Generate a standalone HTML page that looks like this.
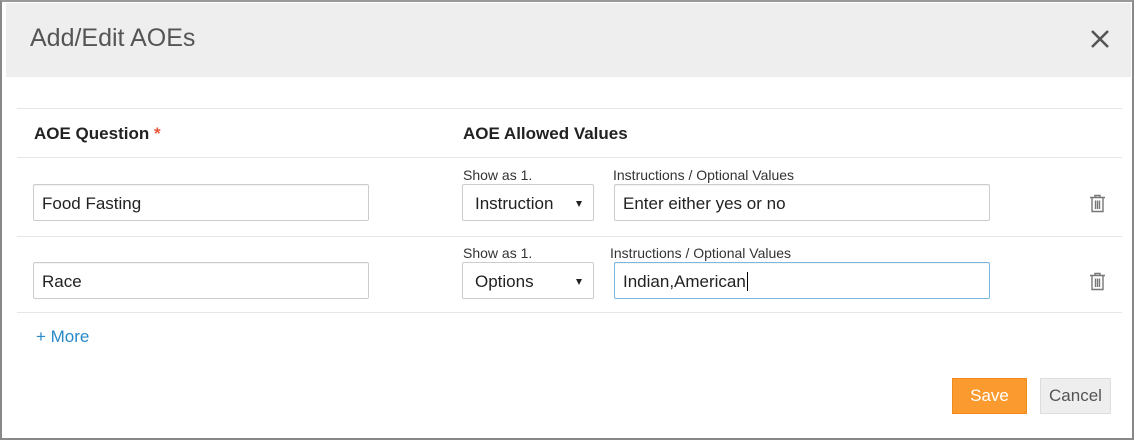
<!DOCTYPE html>
<html><head><meta charset="utf-8"><style>
*{box-sizing:border-box;margin:0;padding:0}
body{width:1137px;height:441px;background:#fff;font-family:"Liberation Sans",sans-serif;position:relative;overflow:hidden;color:#222}
.frame{position:absolute;left:0;top:0;width:1134px;height:440px;border-left:2px solid #888;border-top:2px solid #999;border-right:2px solid #888;border-bottom:2px solid #888}
.hdr{position:absolute;left:6px;top:3px;width:1125px;height:74px;background:#eee}
.title{position:absolute;left:30px;top:24px;font-size:25px;color:#555}
.x{position:absolute;left:1089px;top:28px}
.line{position:absolute;left:17px;width:1105px;height:1px;background:#e6e6e6}
.lbl{position:absolute;font-size:17px;font-weight:bold;color:#222}
.inp{position:absolute;height:37px;border:1px solid #ccc;border-radius:2px;font-size:17px;padding:9px 8px;color:#222;box-shadow:inset 0 1px 1px rgba(0,0,0,.05)}
.sel{position:absolute;height:37px;width:132px;border:1px solid #ccc;border-radius:2px;font-size:17px;padding:9px 12px;color:#222}
.sel:after{content:"";position:absolute;right:11px;top:16px;border-left:3px solid transparent;border-right:3px solid transparent;border-top:6px solid #222}
.sm{position:absolute;font-size:14px;color:#333}
.trash{position:absolute}
</style></head><body>
<div class="frame"></div>
<div class="hdr"></div>
<div class="title">Add/Edit AOEs</div>
<svg class="x" width="22" height="22" viewBox="0 0 22 22"><path d="M3 3L19 19M19 3L3 19" stroke="#555" stroke-width="2.6"/></svg>
<div class="line" style="top:108px"></div>
<div class="line" style="top:157px"></div>
<div class="line" style="top:236px"></div>
<div class="line" style="top:312px"></div>
<div class="lbl" style="left:34px;top:124px">AOE Question <span style="color:#e8553a">*</span></div>
<div class="lbl" style="left:463px;top:124px">AOE Allowed Values</div>

<div class="inp" style="left:33px;top:184px;width:336px">Food Fasting</div>
<div class="sm" style="left:463px;top:167px">Show as 1.</div>
<div class="sm" style="left:613px;top:167px">Instructions / Optional Values</div>
<div class="sel" style="left:462px;top:184px">Instruction</div>
<div class="inp" style="left:614px;top:184px;width:376px">Enter either yes or no</div>

<div class="inp" style="left:33px;top:262px;width:336px">Race</div>
<div class="sm" style="left:463px;top:245px">Show as 1.</div>
<div class="sm" style="left:610px;top:245px">Instructions / Optional Values</div>
<div class="sel" style="left:462px;top:262px">Options</div>
<div class="inp" style="left:614px;top:262px;width:376px;border-color:#7ab8e0">Indian,American<span style="border-left:1px solid #000;margin-left:1px"></span></div>

<svg class="trash" style="left:1089px;top:194px" width="17" height="19" viewBox="0 0 17 19"><g fill="none" stroke="#777" stroke-width="1.4"><path d="M1 3.5H16M6 3.5V1.5H11V3.5M3 4V17.5H14V4M6.5 6.5V15M8.5 6.5V15M10.5 6.5V15"/></g></svg>
<svg class="trash" style="left:1089px;top:272px" width="17" height="19" viewBox="0 0 17 19"><g fill="none" stroke="#777" stroke-width="1.4"><path d="M1 3.5H16M6 3.5V1.5H11V3.5M3 4V17.5H14V4M6.5 6.5V15M8.5 6.5V15M10.5 6.5V15"/></g></svg>

<div style="position:absolute;left:36px;top:327px;font-size:17px;color:#2a8ac8">+ More</div>
<div style="position:absolute;left:952px;top:378px;width:75px;height:36px;background:#fb9a2e;border:1px solid #f08a1a;color:#fff;font-size:17px;text-align:center;line-height:34px">Save</div>
<div style="position:absolute;left:1040px;top:378px;width:71px;height:36px;background:#eee;border:1px solid #ddd;color:#555;font-size:17px;text-align:center;line-height:34px">Cancel</div>
</body></html>
